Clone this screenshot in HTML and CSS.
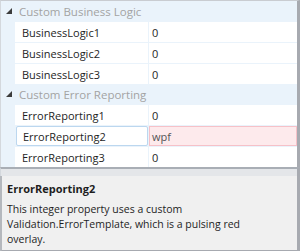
FILE: index.html
```html
<!DOCTYPE html>
<html lang="en">

<head>
    <meta charset="UTF-8">
    <title>Property Grid</title>
    <link rel="stylesheet" href="styles.css">
</head>

<body>
    <div class="grid">
        <div class="category">
            <span class="arrow"></span>
            <span class="cat-title">Custom Business Logic</span>
        </div>
        <div class="row">
            <div class="name">BusinessLogic1</div>
            <div class="value">0</div>
        </div>
        <div class="row">
            <div class="name">BusinessLogic2</div>
            <div class="value">0</div>
        </div>
        <div class="row">
            <div class="name">BusinessLogic3</div>
            <div class="value">0</div>
        </div>

        <div class="category">
            <span class="arrow"></span>
            <span class="cat-title">Custom Error Reporting</span>
        </div>
        <div class="row">
            <div class="name">ErrorReporting1</div>
            <div class="value">0</div>
        </div>
        <div class="row">
            <div class="name selected">ErrorReporting2</div>
            <div class="value error">wpf</div>
        </div>
        <div class="row">
            <div class="name">ErrorReporting3</div>
            <div class="value">0</div>
        </div>
    </div>

    <div class="splitter"></div>

    <div class="description">
        <div class="desc-title">ErrorReporting2</div>
        <p>This integer property uses a custom Validation.ErrorTemplate, which is a pulsing red overlay.</p>
    </div>
</body>

</html>
```

FILE: styles.css
```css
body {
    margin: 0;
    width: 300px;
    height: 251px;
    font-family: "Open Sans", sans-serif;
    font-size: 11px;
    color: #1e1e1e;
    overflow: hidden;
}

.grid {
    border-top: 1px solid #c9ccd1;
    border-left: 1px solid #d4d8dd;
    border-right: 3px solid #a7aab0;
    background: #eaf3fb;
}

.category {
    display: flex;
    align-items: center;
    height: 20px;
    font-size: 11.5px;
}

.arrow {
    width: 0;
    height: 0;
    margin: 0 7px 0 5px;
    border-left: 6px solid transparent;
    border-bottom: 6px solid #3c3c3c;
}

.cat-title {
    color: #a3a3a3;
}

.row {
    display: grid;
    grid-template-columns: 133px 1fr;
    gap: 1px;
    height: 20px;
    margin: 1px 0 0 14px;
}

.name,
.value {
    background: #fff;
    display: flex;
    align-items: center;
    padding-left: 7px;
}

.name.selected {
    border: 1px solid #bcd7ef;
    border-radius: 2px;
    padding-left: 6px;
    margin-left: 1px;
}

.value {
    padding-left: 3px;
}

.value.error {
    background: #fdeaec;
    border: 1px solid #f6c1c8;
    padding-left: 2px;
    color: #555;
}

.splitter {
    height: 7px;
    border-top: 2px solid #a9aeb5;
    background: #e4e6e9;
    border-right: 3px solid #a7aab0;
    border-left: 1px solid #d4d8dd;
}

.description {
    height: 70px;
    background: #f0f0f0;
    border-left: 2px solid #b5b8bd;
    border-right: 3px solid #a7aab0;
    border-bottom: 2px solid #a7aab0;
    padding: 4px 0 0 5px;
    font-size: 10.5px;
}

.desc-title {
    font-weight: bold;
    font-size: 11px;
    line-height: 17px;
}

.description p {
    margin: 5px 0 0;
    line-height: 15px;
    padding-right: 20px;
}
```
